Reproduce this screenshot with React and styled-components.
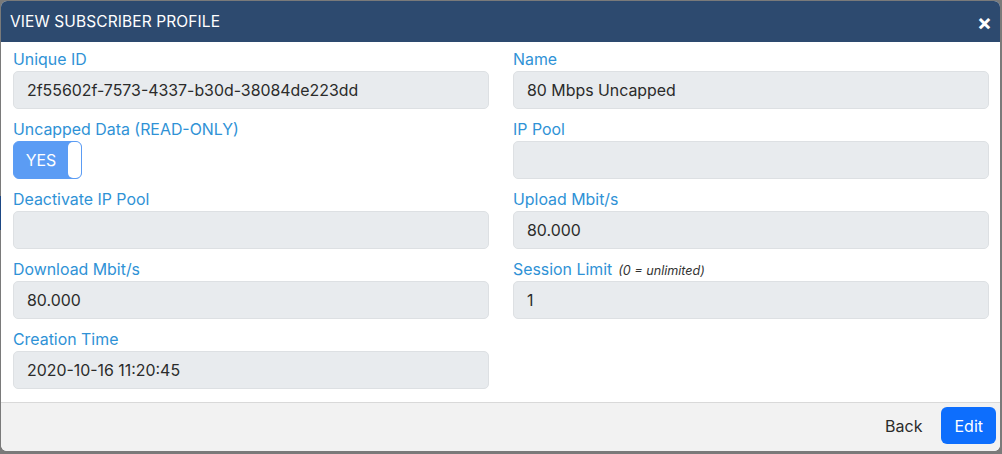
import React from "react";
import styled, { createGlobalStyle } from "styled-components";

const Global = createGlobalStyle`
  html, body { margin: 0; padding: 0; }
  body {
    background: #7a7a7a;
    font-family: Inter, "Noto Sans", sans-serif;
    width: 1002px;
    height: 454px;
    overflow: hidden;
  }
`;

const Backdrop = styled.div`
  position: relative;
  width: 1002px;
  height: 454px;
  padding: 1px 2px 3px 1px;
  box-sizing: border-box;
`;

const BackdropMark = styled.div`
  position: absolute;
  left: 0;
  top: 196px;
  width: 1px;
  height: 34px;
  background: #1d4784;
`;

const Modal = styled.div`
  position: relative;
  width: 999px;
  height: 450px;
  background: #fff;
  border-radius: 6px;
  overflow: hidden;
  display: flex;
  flex-direction: column;
`;

const Header = styled.div`
  height: 41px;
  flex: none;
  background: #2d4a6f;
  color: #fff;
  display: flex;
  align-items: center;
  justify-content: space-between;
  padding: 0 8px 0 9px;
  box-sizing: border-box;
`;

const Title = styled.div`
  font-size: 15.5px;
  letter-spacing: 0.1px;
`;

const Close = styled.span`
  font-size: 22px;
  font-weight: 700;
  line-height: 1;
  margin-top: 1px;
`;

const Body = styled.div`
  flex: 1;
  padding: 8px 11px 0 12px;
  display: grid;
  grid-template-columns: 476px 476px;
  column-gap: 24px;
  align-content: start;
`;

const Field = styled.div`
  display: flex;
  flex-direction: column;
  margin-bottom: 11px;
`;

const Label = styled.div`
  height: 21px;
  line-height: 20px;
  font-size: 15.9px;
  color: #2f92d6;
  display: flex;
  align-items: baseline;
  gap: 6px;
`;

const Hint = styled.span`
  font-size: 12.6px;
  font-style: italic;
  color: #333;
`;

const Input = styled.div`
  height: 38px;
  box-sizing: border-box;
  background: #e8ebee;
  border: 1px solid #dde0e3;
  border-radius: 5px;
  padding: 0 13px;
  display: flex;
  align-items: center;
  font-size: 15.9px;
  color: #2b2b2b;
`;

const Toggle = styled.div`
  width: 69px;
  height: 38px;
  box-sizing: border-box;
  border-radius: 6px;
  background: #5b9cf4;
  border: 1px solid #5b9cf4;
  display: flex;
  align-items: stretch;
`;

const ToggleText = styled.span`
  flex: 1;
  display: flex;
  align-items: center;
  justify-content: center;
  color: #fff;
  font-size: 15.9px;
`;

const Knob = styled.span`
  width: 13px;
  background: #fff;
  border-radius: 5px;
`;

const Footer = styled.div`
  height: 49px;
  flex: none;
  background: #f2f2f2;
  border-top: 1px solid #d9d9d9;
  box-sizing: border-box;
  display: flex;
  align-items: center;
  justify-content: flex-end;
  gap: 19px;
  padding: 0 4px 3px 0;
`;

const Button = styled.button`
  font-family: inherit;
  font-size: 16px;
  border: none;
  border-radius: 6px;
  height: 37px;
  padding: 0 ${(p) => (p.$primary ? "13px" : "0")};
  background: ${(p) => (p.$primary ? "#0d6efd" : "transparent")};
  color: ${(p) => (p.$primary ? "#fff" : "#2b2b2b")};
  cursor: pointer;
`;

const fields = [
  { label: "Unique ID", value: "2f55602f-7573-4337-b30d-38084de223dd" },
  { label: "Name", value: "80 Mbps Uncapped" },
  { label: "Uncapped Data (READ-ONLY)", toggle: true },
  { label: "IP Pool", value: "" },
  { label: "Deactivate IP Pool", value: "" },
  { label: "Upload Mbit/s", value: "80.000" },
  { label: "Download Mbit/s", value: "80.000" },
  { label: "Session Limit", hint: "(0 = unlimited)", value: "1" },
  { label: "Creation Time", value: "2020-10-16 11:20:45" },
];

export default function App() {
  return (
    <>
      <Global />
      <Backdrop>
        <BackdropMark />
        <Modal>
          <Header>
            <Title>VIEW SUBSCRIBER PROFILE</Title>
            <Close>×</Close>
          </Header>
          <Body>
            {fields.map((f) => (
              <Field key={f.label}>
                <Label>
                  {f.label}
                  {f.hint && <Hint>{f.hint}</Hint>}
                </Label>
                {f.toggle ? (
                  <Toggle>
                    <ToggleText>YES</ToggleText>
                    <Knob />
                  </Toggle>
                ) : (
                  <Input>{f.value}</Input>
                )}
              </Field>
            ))}
          </Body>
          <Footer>
            <Button>Back</Button>
            <Button $primary>Edit</Button>
          </Footer>
        </Modal>
      </Backdrop>
    </>
  );
}
